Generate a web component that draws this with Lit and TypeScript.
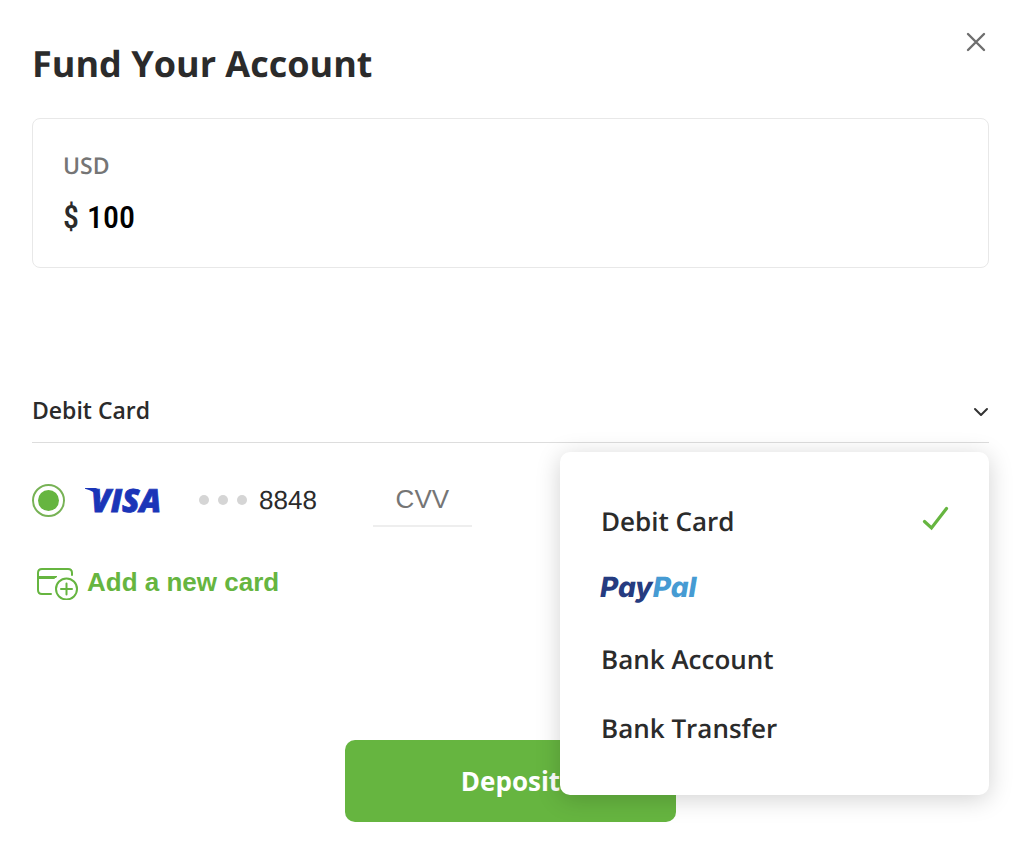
import { LitElement, html, css } from "lit";
import { customElement, property, state } from "lit/decorators.js";

const paypalLogo = html`<svg class="paypal" width="98" height="36" viewBox="0 0 98 36" role="img" aria-label="PayPal">
  <text class="paypal-text" x="-1" y="25"><tspan fill="#253b80">Pay</tspan><tspan fill="#469bd3">Pal</tspan></text>
</svg>`;

const visaLogo = html`<svg class="visa" width="78" height="28" viewBox="0 0 78 28" role="img" aria-label="VISA">
  <path fill="#1a35b8" d="M0 2H10.500Q13 2.200 13.600 5L15.500 13Q10 5 0 2.800Z" />
  <text class="visa-text" x="6" y="26">VISA</text>
</svg>`;

@customElement("payment-menu")
export class PaymentMenu extends LitElement {
  @property() value = "debit";

  static styles = css`
    :host {
      display: block;
      box-sizing: border-box;
      padding: 34px 0 33px;
      border-radius: 10px;
      background: #fff;
      box-shadow: 0 4px 24px rgba(0, 0, 0, 0.18);
    }
    ul {
      margin: 0;
      padding: 0;
      list-style: none;
    }
    .option {
      display: flex;
      align-items: center;
      justify-content: space-between;
      width: 100%;
      height: 69px;
      padding: 0 40px 0 41px;
      border: 0;
      background: none;
      color: #2b2b2b;
      font: 600 26px/36px "Open Sans", sans-serif;
      text-rendering: geometricPrecision;
      text-align: left;
      cursor: pointer;
    }
    svg {
      display: block;
    }
    .paypal {
      overflow: visible;
    }
    .paypal-text {
      font: italic 800 28px Inter, sans-serif;
      font-feature-settings: "cv11";
    }
  `;

  private choose(value: string) {
    this.dispatchEvent(new CustomEvent("choose", { detail: value }));
  }

  render() {
    const items = [
      ["debit", "Debit Card"],
      ["paypal", paypalLogo],
      ["account", "Bank Account"],
      ["transfer", "Bank Transfer"],
    ] as const;
    return html`<ul>
      ${items.map(
        ([id, label]) => html`<li>
          <button class="option" type="button" aria-pressed=${this.value === id} @click=${() => this.choose(id)}>
            <span>${label}</span>
            ${this.value === id
              ? html`<svg width="27" height="30" viewBox="0 0 27 30" aria-hidden="true">
                  <path d="M2.500 15.500L9.500 22L24.500 2.500" fill="none" stroke="#66b540" stroke-width="3.2" stroke-linecap="round" />
                </svg>`
              : ""}
          </button>
        </li>`
      )}
    </ul>`;
  }
}

@customElement("app-root")
export class AppRoot extends LitElement {
  @state() private method = "debit";
  @state() private open = true;

  static styles = css`
    :host {
      display: block;
      min-height: 100vh;
      box-sizing: border-box;
      padding: 24px 35px 27px 32px;
      background: #fff;
      color: #2b2b2b;
      font-family: "Open Sans", sans-serif;
      text-rendering: geometricPrecision;
    }
    * {
      box-sizing: border-box;
    }
    svg {
      display: block;
    }
    header {
      display: flex;
      align-items: flex-start;
      justify-content: space-between;
    }
    h1 {
      margin: 0;
      padding-top: 14px;
      font-size: 36px;
      line-height: 52px;
      font-weight: 700;
    }
    .close {
      display: flex;
      padding: 8px 3px;
      border: 0;
      background: none;
      cursor: pointer;
    }
    .amount {
      display: flex;
      flex-direction: column;
      gap: 16px;
      margin-top: 28px;
      padding: 30px;
      border: 1px solid #e8e8e8;
      border-radius: 8px;
    }
    .amount label {
      color: #757575;
      font-size: 23px;
      line-height: 32px;
      font-weight: 600;
    }
    .money {
      display: flex;
      gap: 8px;
      color: #2b2b2b;
      font: 500 32px/40px "Roboto Condensed", Roboto, sans-serif;
    }
    input,
    select {
      margin: 0;
      padding: 0;
      border: 0;
      border-radius: 0;
      outline: 0;
      background: none;
    }
    .money input {
      flex: 1;
      min-width: 0;
      height: 40px;
      color: #000;
      font: inherit;
    }
    .method {
      position: relative;
      margin-top: 109px;
    }
    .method select {
      display: block;
      appearance: none;
      width: 100%;
      height: 66px;
      border-bottom: 1px solid #ddd;
      color: #2b2b2b;
      font: 600 23px/32px "Open Sans", sans-serif;
      cursor: pointer;
    }
    .chevron {
      position: absolute;
      right: 0;
      top: 29px;
      pointer-events: none;
    }
    payment-menu {
      position: absolute;
      z-index: 1;
      top: 75px;
      right: 0;
      width: 429px;
      max-width: 100%;
    }
    .card {
      display: flex;
      align-items: center;
      height: 84px;
      margin-top: 15px;
    }
    .pick {
      display: flex;
      align-items: center;
    }
    .pick input {
      appearance: none;
      width: 33px;
      height: 33px;
      margin-right: 20px;
      border: 2px solid #77b255;
      border-radius: 50%;
    }
    .pick input:checked {
      background: #66b540;
      background-clip: content-box;
      padding: 4px;
    }
    .visa {
      overflow: visible;
    }
    .visa-text {
      fill: #1a35b8;
      stroke: #1a35b8;
      stroke-width: 0.8px;
      font: italic 800 32px "Open Sans", sans-serif;
    }
    .dots {
      display: flex;
      gap: 9px;
      margin: 0 12px 0 36px;
    }
    .dots i {
      width: 10px;
      height: 10px;
      border-radius: 50%;
      background: #d5d5d5;
    }
    .digits {
      font: 400 26px/36px "Liberation Sans", sans-serif;
    }
    .cvv {
      width: 99px;
      height: 54px;
      margin-left: 56px;
      border-bottom: 2px solid #eee;
      color: #2b2b2b;
      font: 400 26px/36px "Liberation Sans", sans-serif;
      text-align: center;
    }
    .cvv::placeholder {
      color: #757575;
      opacity: 1;
    }
    .add {
      display: flex;
      align-items: center;
      gap: 8px;
      height: 40px;
      margin-top: 20px;
      padding: 0 0 0 5px;
      border: 0;
      background: none;
      color: #66b540;
      font: 700 26px/36px "Liberation Sans", sans-serif;
      cursor: pointer;
    }
    .deposit {
      display: block;
      width: 331px;
      height: 82px;
      margin: 138px auto 0;
      border: 0;
      border-radius: 10px;
      background: #66b540;
      color: #fff;
      font: 700 26px/36px "Open Sans", sans-serif;
      cursor: pointer;
    }
  `;

  private toggle(e: Event) {
    e.preventDefault();
    this.open = !this.open;
  }

  private choose(e: CustomEvent) {
    this.method = e.detail;
    this.open = false;
  }

  render() {
    return html`
      <header>
        <h1>Fund Your Account</h1>
        <button class="close" type="button" aria-label="Close">
          <svg width="20" height="20" viewBox="0 0 20 20" aria-hidden="true">
            <path d="M2 2L18 18M18 2L2 18" stroke="#6e6e6e" stroke-width="2.4" stroke-linecap="round" />
          </svg>
        </button>
      </header>
      <main>
        <section class="amount">
          <label for="amount">USD</label>
          <div class="money"><span>$</span><input id="amount" inputmode="decimal" value="100" /></div>
        </section>
        <section class="method">
          <select id="method" aria-label="Payment method" .value=${this.method} @mousedown=${this.toggle}>
            <option value="debit">Debit Card</option>
            <option value="paypal">PayPal</option>
            <option value="account">Bank Account</option>
            <option value="transfer">Bank Transfer</option>
          </select>
          <svg class="chevron" width="16" height="12" viewBox="0 0 16 12" aria-hidden="true">
            <path d="M2 3L8 9L14 3" fill="none" stroke="#333" stroke-width="2" stroke-linecap="round" stroke-linejoin="round" />
          </svg>
          ${this.open ? html`<payment-menu .value=${this.method} @choose=${this.choose}></payment-menu>` : ""}
        </section>
        <section class="card">
          <label class="pick">
            <input type="radio" name="card" checked />
            ${visaLogo}
            <span class="dots"><i></i><i></i><i></i></span>
            <span class="digits">8848</span>
          </label>
          <input class="cvv" aria-label="CVV" placeholder="CVV" inputmode="numeric" />
        </section>
        <button class="add" type="button">
          <svg width="42" height="36" viewBox="0 0 42 36" fill="none" stroke="#66b540" stroke-width="2" aria-hidden="true">
            <path d="M14 30H5Q1 30 1 26V9Q1 5 5 5H31Q35 5 35 9V11" stroke-linecap="round" />
            <path d="M1 12.500H20L17 14.500H1Z" fill="#66b540" stroke-width="1" />
            <circle cx="29.500" cy="25" r="10.500" />
            <path d="M29.500 19.500V30.500M24 25H35" stroke-linecap="round" />
          </svg>
          Add a new card
        </button>
        <button class="deposit" type="button">Deposit</button>
      </main>
    `;
  }
}
